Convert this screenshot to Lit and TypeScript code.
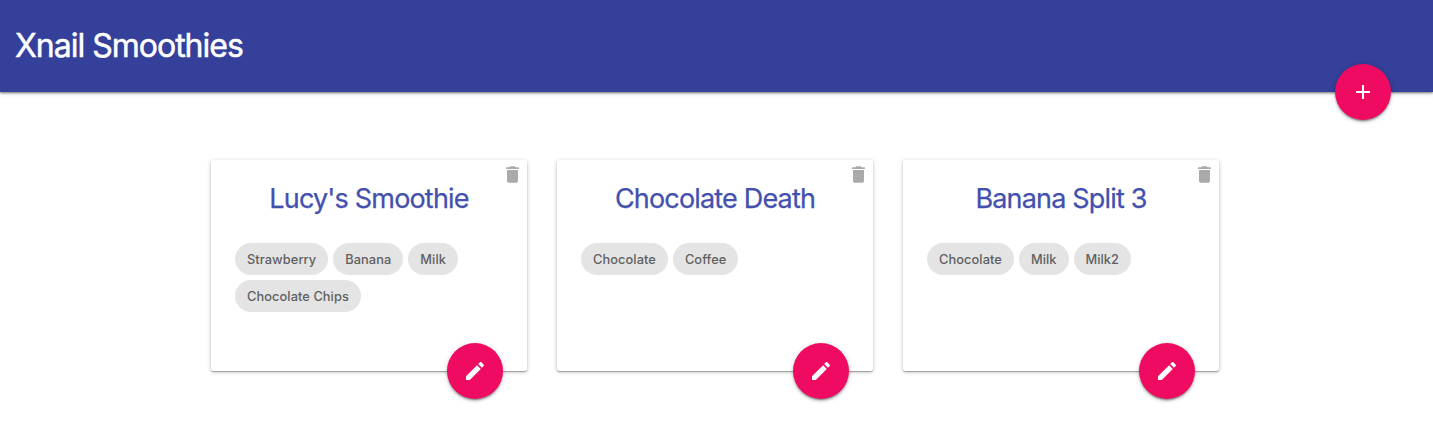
import { LitElement, html, css } from "lit";
import { customElement, property } from "lit/decorators.js";

interface Smoothie {
  title: string;
  ingredients: string[];
}

const smoothies: Smoothie[] = [
  { title: "Lucy's Smoothie", ingredients: ["Strawberry", "Banana", "Milk", "Chocolate Chips"] },
  { title: "Chocolate Death", ingredients: ["Chocolate", "Coffee"] },
  { title: "Banana Split 3", ingredients: ["Chocolate", "Milk", "Milk2"] },
];

const paths = {
  add: "M19 13h-6v6h-2v-6H5v-2h6V5h2v6h6v2z",
  edit: "M3 17.25V21h3.75L17.81 9.94l-3.75-3.75L3 17.25zM20.71 7.04c.39-.39.39-1.02 0-1.41l-2.34-2.34c-.39-.39-1.02-.39-1.41 0l-1.83 1.83 3.75 3.75 1.83-1.83z",
  delete: "M6 19c0 1.1.9 2 2 2h8c1.1 0 2-.9 2-2V7H6v12zM19 4h-3.5l-1-1h-5l-1 1H5v2h14V4z",
};

@customElement("fab-button")
class FabButton extends LitElement {
  @property() icon: "add" | "edit" = "add";

  static styles = css`
    :host { display: block; }
    .fab {
      display: flex;
      align-items: center;
      justify-content: center;
      width: 56px;
      height: 56px;
      padding: 0;
      border: 0;
      border-radius: 50%;
      background: #ee0b61;
      box-shadow: 0 2px 2px 0 rgba(0, 0, 0, 0.2), 0 1px 5px 0 rgba(0, 0, 0, 0.2), 0 3px 1px -2px rgba(0, 0, 0, 0.2);
    }
    .icon { width: 24px; height: 24px; fill: #fff; }
  `;

  render() {
    return html`<button class="fab" aria-label=${this.icon}>
      <svg class="icon" viewBox="0 0 24 24"><path d=${paths[this.icon]}></path></svg>
    </button>`;
  }
}

@customElement("smoothie-card")
class SmoothieCard extends LitElement {
  @property({ attribute: false }) smoothie!: Smoothie;

  static styles = css`
    :host { display: block; }
    .card {
      position: relative;
      box-sizing: border-box;
      width: 316px;
      height: 211px;
      padding: 17px 24px 0;
      border-radius: 2px;
      background: #fff;
      box-shadow: 0 1px 1px 0 rgba(0, 0, 0, 0.28), 0 1px 4px 0 rgba(0, 0, 0, 0.24);
    }
    .title {
      margin: 0 0 23px;
      color: #4350ae;
      font-size: 27px;
      line-height: 43px;
      font-weight: 400;
      letter-spacing: -0.82px;
      -webkit-text-stroke: 0.25px #4350ae;
      text-align: center;
      white-space: nowrap;
    }
    .chips { display: flex; flex-wrap: wrap; gap: 5px; }
    .chip {
      height: 32px;
      padding: 0 12px;
      border-radius: 16px;
      background: #e4e4e4;
      color: #606060;
      font-size: 12.8px;
      line-height: 33px;
      font-weight: 500;
      letter-spacing: 0.08px;
      white-space: nowrap;
    }
    .delete { position: absolute; top: 4px; right: 4px; width: 21px; height: 21px; fill: #aaa; }
    .edit { position: absolute; right: 24px; bottom: -28px; }
  `;

  render() {
    return html`<article class="card">
      <svg class="delete" viewBox="0.5 0.5 23 23"><path d=${paths.delete}></path></svg>
      <h2 class="title">${this.smoothie.title}</h2>
      <div class="chips">
        ${this.smoothie.ingredients.map((name) => html`<span class="chip">${name}</span>`)}
      </div>
      <fab-button class="edit" icon="edit"></fab-button>
    </article>`;
  }
}

@customElement("app-root")
class AppRoot extends LitElement {
  static styles = css`
    :host {
      display: block;
      min-height: 434px;
      background: #fff;
      font-family: Inter, "Liberation Sans", sans-serif;
    }
    .header {
      position: relative;
      display: flex;
      align-items: center;
      box-sizing: border-box;
      height: 92px;
      padding: 0 15px;
      background: #344099;
      box-shadow: 0 1px 2px rgba(0, 0, 0, 0.45), 0 2px 4px rgba(0, 0, 0, 0.14);
    }
    .heading {
      margin: 0;
      color: #fff;
      font-size: 32px;
      line-height: 40px;
      font-weight: 400;
      letter-spacing: -1px;
      -webkit-text-stroke: 0.5px #fff;
      white-space: nowrap;
    }
    .add { position: absolute; right: 42px; bottom: -28px; }
    .list { display: flex; gap: 30px; padding: 68px 0 0 211px; }
  `;

  render() {
    return html`
      <header class="header">
        <h1 class="heading">Xnail Smoothies</h1>
        <fab-button class="add" icon="add"></fab-button>
      </header>
      <main class="list">
        ${smoothies.map((s) => html`<smoothie-card .smoothie=${s}></smoothie-card>`)}
      </main>
    `;
  }
}
